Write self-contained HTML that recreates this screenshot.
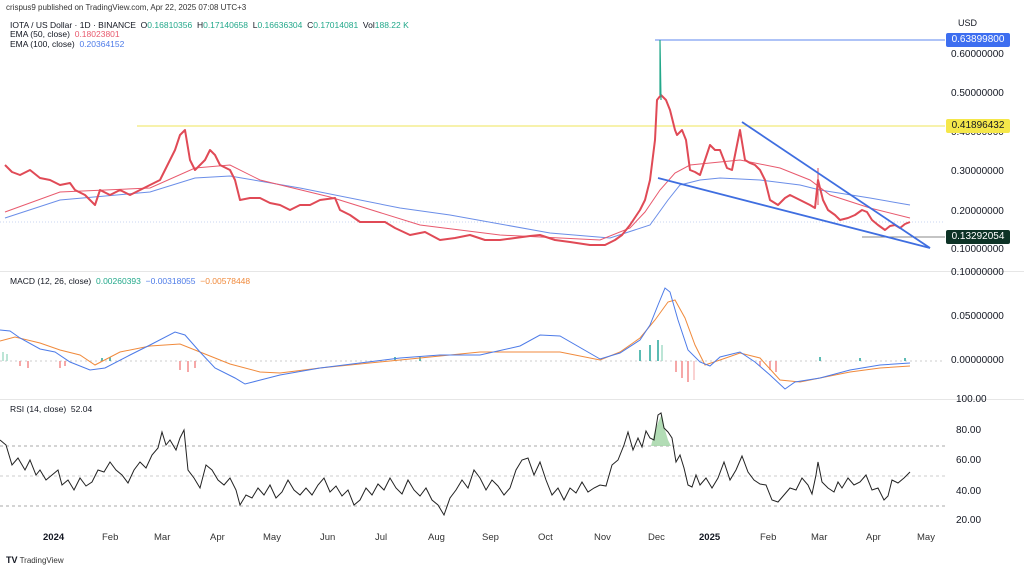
<!DOCTYPE html>
<html><head><meta charset="utf-8"><style>
html,body{margin:0;padding:0;background:#fff;}
body{width:1024px;height:569px;overflow:hidden;position:relative;font-family:"Liberation Sans",sans-serif;}
.t{position:absolute;white-space:nowrap;font-size:8.5px;color:#131722;}
.ax{position:absolute;left:951px;font-size:10px;color:#131722;}
.m{position:absolute;top:532px;font-size:9.5px;color:#333;}
.lb{position:absolute;left:946px;width:64px;height:14px;font-size:10px;line-height:14px;text-align:center;border-radius:2px;}
</style></head><body>
<svg width="1024" height="569" style="position:absolute;left:0;top:0">
<line x1="0" y1="271.5" x2="1024" y2="271.5" stroke="#e6e6e6"/>
<line x1="0" y1="399.5" x2="1024" y2="399.5" stroke="#e6e6e6"/>
<line x1="137" y1="126" x2="945" y2="126" stroke="#f2ea7a" stroke-width="1.2"/>
<line x1="655" y1="40" x2="945" y2="40" stroke="#7d9ff2" stroke-width="1.2"/>
<line x1="0" y1="222" x2="945" y2="222" stroke="#c8d4f0" stroke-width="1" stroke-dasharray="1 2"/>
<line x1="862" y1="237" x2="945" y2="237" stroke="#888" stroke-width="1"/>
<polyline fill="none" stroke="#6b8ee8" stroke-width="1" points="5,218 60,200 150,192 195,178 230,176 300,188 400,208 450,215 550,233 610,238 650,225 668,200 680,185 700,180 720,178 760,180 800,185 820,190 870,198 910,205"/>
<polyline fill="none" stroke="#e85a6e" stroke-width="1" points="5,212 60,192 150,188 195,168 230,165 260,180 330,197 420,225 500,235 600,240 630,228 645,212 660,190 675,173 690,165 740,160 780,168 810,180 830,195 870,208 910,218"/>
<polyline fill="none" stroke="#e04a56" stroke-width="2" stroke-linejoin="round" points="5,165 12,172 20,175 30,170 40,178 50,180 60,185 70,183 75,190 85,195 95,205 100,190 110,195 120,190 130,195 140,190 150,185 160,180 165,170 170,160 175,150 180,135 185,130 190,160 195,170 200,165 205,160 210,150 215,155 220,165 230,170 235,180 240,200 250,198 260,198 270,203 280,205 290,210 300,205 310,205 320,200 335,198 340,210 350,215 360,222 370,222 385,222 395,228 410,235 425,232 440,240 455,238 470,235 485,240 500,240 515,238 530,236 540,235 555,240 570,242 590,245 605,245 615,240 622,235 630,225 640,210 645,200 650,180 655,140 657,100 661,95 666,100 670,110 675,130 677,135 682,130 686,140 690,170 695,172 700,175 705,160 710,145 715,150 720,150 727,168 732,170 737,145 740,130 745,160 750,163 755,165 760,170 765,180 770,200 778,205 785,198 790,195 800,200 810,205 815,208 818,180 823,200 828,210 835,215 840,220 848,218 855,215 862,210 867,212 872,220 878,225 885,230 890,226 895,225 900,228 905,224 910,222"/>
<polyline fill="none" stroke="#22a88a" stroke-width="1.2" points="660,95 660,40 661,100"/>
<polyline fill="none" stroke="#e04a56" stroke-width="1" points="818,205 818,168"/>
<line x1="742" y1="122" x2="930" y2="248" stroke="#3f6ee0" stroke-width="1.8"/>
<line x1="658" y1="178" x2="930" y2="248" stroke="#3f6ee0" stroke-width="1.8"/>
<line x1="0" y1="361" x2="945" y2="361" stroke="#ccc" stroke-dasharray="2 3"/>
<g stroke-width="1.5">
<line x1="3" y1="352" x2="3" y2="361" stroke="#a6dcc8"/><line x1="7" y1="354" x2="7" y2="361" stroke="#a6dcc8"/>
<line x1="20" y1="361" x2="20" y2="366" stroke="#f28b8b"/><line x1="28" y1="361" x2="28" y2="368" stroke="#f28b8b"/>
<line x1="60" y1="361" x2="60" y2="368" stroke="#f28b8b"/><line x1="65" y1="361" x2="65" y2="366" stroke="#f28b8b"/>
<line x1="102" y1="358" x2="102" y2="361" stroke="#26a69a"/><line x1="110" y1="357" x2="110" y2="361" stroke="#26a69a"/>
<line x1="180" y1="361" x2="180" y2="370" stroke="#f28b8b"/><line x1="188" y1="361" x2="188" y2="372" stroke="#f28b8b"/><line x1="195" y1="361" x2="195" y2="368" stroke="#f28b8b"/>
<line x1="395" y1="357" x2="395" y2="361" stroke="#26a69a"/><line x1="420" y1="356" x2="420" y2="361" stroke="#26a69a"/>
<line x1="640" y1="350" x2="640" y2="361" stroke="#26a69a"/><line x1="650" y1="345" x2="650" y2="361" stroke="#26a69a"/><line x1="658" y1="340" x2="658" y2="361" stroke="#26a69a"/><line x1="662" y1="345" x2="662" y2="361" stroke="#a6dcc8"/>
<line x1="676" y1="361" x2="676" y2="372" stroke="#f28b8b"/><line x1="682" y1="361" x2="682" y2="378" stroke="#f28b8b"/><line x1="688" y1="361" x2="688" y2="382" stroke="#f28b8b"/><line x1="694" y1="361" x2="694" y2="380" stroke="#f9c2c2"/>
<line x1="760" y1="361" x2="760" y2="366" stroke="#f28b8b"/><line x1="770" y1="361" x2="770" y2="370" stroke="#f28b8b"/><line x1="776" y1="361" x2="776" y2="372" stroke="#f28b8b"/>
<line x1="820" y1="357" x2="820" y2="361" stroke="#26a69a"/><line x1="860" y1="358" x2="860" y2="361" stroke="#26a69a"/><line x1="905" y1="358" x2="905" y2="361" stroke="#26a69a"/>
</g>
<polyline fill="none" stroke="#f08a3c" stroke-width="1" points="0,341 15,337 40,343 60,350 80,355 95,365 120,352 150,346 180,344 200,352 230,364 260,372 280,373 320,368 400,360 480,352 560,352 600,360 620,352 640,338 655,320 668,302 675,300 685,318 695,345 705,365 720,360 740,353 760,358 780,380 800,382 850,372 880,368 910,366"/>
<polyline fill="none" stroke="#4d7be8" stroke-width="1" points="0,330 10,331 20,338 40,349 55,352 70,362 90,370 105,368 130,355 150,345 175,332 185,335 200,352 215,368 235,378 245,384 280,375 320,368 400,358 440,355 480,355 520,346 540,335 560,336 600,359 620,353 640,340 650,325 658,305 665,288 670,292 678,320 688,350 700,362 710,366 720,357 740,352 755,362 770,375 785,389 795,382 820,378 850,370 880,365 910,363"/>
<line x1="0" y1="446" x2="945" y2="446" stroke="#aaa" stroke-dasharray="3 3"/>
<line x1="0" y1="476" x2="945" y2="476" stroke="#ccc" stroke-dasharray="3 3"/>
<line x1="0" y1="506" x2="945" y2="506" stroke="#aaa" stroke-dasharray="3 3"/>
<path d="M651,446 L655,430 L660,418 L662,414 L665,430 L668,440 L671,446 Z" fill="#9fd3a3" opacity="0.8"/>
<polyline fill="none" stroke="#222" stroke-width="1" points="0,440 6,445 12,465 18,458 25,470 30,460 36,475 40,470 46,480 52,475 58,470 62,485 68,480 74,490 80,478 86,486 92,482 98,470 104,472 110,462 116,470 122,475 128,483 134,470 140,462 146,468 152,455 158,448 162,432 166,445 170,440 176,450 180,438 184,430 188,470 194,478 200,488 206,465 212,470 218,480 224,485 230,478 236,490 240,505 246,495 252,498 258,488 264,495 270,485 276,498 282,492 288,480 294,490 300,495 306,488 312,495 318,485 324,478 330,492 336,486 342,496 348,490 354,505 360,500 366,488 372,495 378,484 384,490 390,478 396,488 402,494 408,480 414,490 420,496 426,488 432,500 438,505 444,515 450,498 456,490 462,480 468,488 474,470 480,478 486,490 492,480 498,486 504,495 510,488 516,470 522,460 528,458 534,475 540,462 546,480 552,495 558,488 564,500 570,488 576,493 582,482 588,492 594,488 600,485 606,486 612,465 618,460 624,445 628,432 633,450 638,438 642,447 646,431 650,438 654,440 658,415 661,413 664,428 668,432 672,438 676,462 680,455 684,468 688,485 692,487 696,475 700,485 706,478 712,488 718,478 724,462 730,480 736,470 742,456 748,472 754,480 760,484 766,485 772,500 778,502 784,495 790,488 796,490 802,478 808,485 812,494 816,475 818,462 822,482 828,488 834,492 838,482 842,488 848,478 854,485 860,482 866,475 872,490 878,488 884,500 888,496 892,480 898,483 904,478 910,472"/>
</svg>
<div class="t" style="left:6px;top:3px;font-size:8px;color:#333">crispus9 published on TradingView.com, Apr 22, 2025 07:08 UTC+3</div>
<div class="t" style="left:10px;top:20px">IOTA / US Dollar · 1D · BINANCE &nbsp;O<span style="color:#22a88a">0.16810356</span> &nbsp;H<span style="color:#22a88a">0.17140658</span> &nbsp;L<span style="color:#22a88a">0.16636304</span> &nbsp;C<span style="color:#22a88a">0.17014081</span> &nbsp;Vol<span style="color:#22a88a">188.22 K</span></div>
<div class="t" style="left:10px;top:29px">EMA (50, close) &nbsp;<span style="color:#e85a6e">0.18023801</span></div>
<div class="t" style="left:10px;top:39px">EMA (100, close) &nbsp;<span style="color:#4d7be8">0.20364152</span></div>
<div class="t" style="left:10px;top:276px">MACD (12, 26, close) &nbsp;<span style="color:#22a88a">0.00260393</span> &nbsp;<span style="color:#4d7be8">−0.00318055</span> &nbsp;<span style="color:#f08a3c">−0.00578448</span></div>
<div class="t" style="left:10px;top:404px">RSI (14, close) &nbsp;52.04</div>
<div class="ax" style="top:18px;left:958px;font-size:9px">USD</div>
<div class="ax" style="top:49px">0.60000000</div>
<div class="ax" style="top:88px">0.50000000</div>
<div class="ax" style="top:127px">0.40000000</div>
<div class="ax" style="top:166px">0.30000000</div>
<div class="ax" style="top:206px">0.20000000</div>
<div class="ax" style="top:244px">0.10000000</div>
<div class="lb" style="top:33px;background:#3d6ef0;color:#fff">0.63899800</div>
<div class="lb" style="top:119px;background:#f5e74a;color:#131722">0.41896432</div>
<div class="lb" style="top:230px;background:#0d3326;color:#fff">0.13292054</div>
<div class="ax" style="top:267px">0.10000000</div>
<div class="ax" style="top:311px">0.05000000</div>
<div class="ax" style="top:355px">0.00000000</div>
<div class="ax" style="top:394px;left:956px">100.00</div>
<div class="ax" style="top:425px;left:956px">80.00</div>
<div class="ax" style="top:455px;left:956px">60.00</div>
<div class="ax" style="top:486px;left:956px">40.00</div>
<div class="ax" style="top:515px;left:956px">20.00</div>
<div class="m" style="left:43px;font-weight:bold;color:#131722">2024</div>
<div class="m" style="left:102px">Feb</div>
<div class="m" style="left:154px">Mar</div>
<div class="m" style="left:210px">Apr</div>
<div class="m" style="left:263px">May</div>
<div class="m" style="left:320px">Jun</div>
<div class="m" style="left:375px">Jul</div>
<div class="m" style="left:428px">Aug</div>
<div class="m" style="left:482px">Sep</div>
<div class="m" style="left:538px">Oct</div>
<div class="m" style="left:594px">Nov</div>
<div class="m" style="left:648px">Dec</div>
<div class="m" style="left:699px;font-weight:bold;color:#131722">2025</div>
<div class="m" style="left:760px">Feb</div>
<div class="m" style="left:811px">Mar</div>
<div class="m" style="left:866px">Apr</div>
<div class="m" style="left:917px">May</div>
<div class="t" style="left:6px;top:555px;font-size:8px;color:#333"><b style="font-size:9px;color:#131722">TV</b> TradingView</div>
</body></html>
